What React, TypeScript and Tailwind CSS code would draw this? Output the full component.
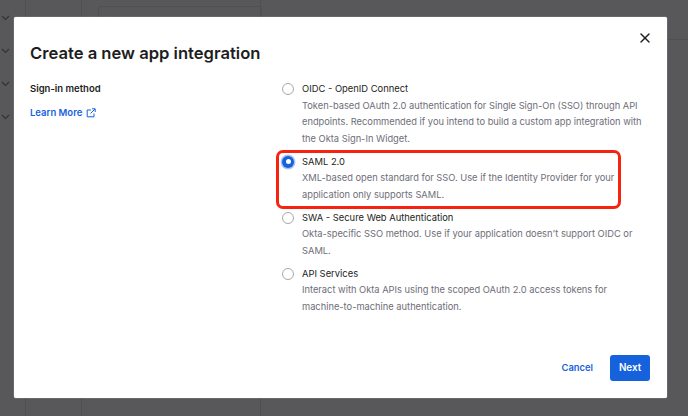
import React from 'react';
import { X, Search } from 'lucide-react';

const font = { fontFamily: 'Inter, "Noto Sans", sans-serif' };

interface MethodOption {
  title: string;
  lines: string[];
  selected?: boolean;
}

const options: MethodOption[] = [
  {
    title: 'OIDC - OpenID Connect',
    lines: [
      'Token-based OAuth 2.0 authentication for Single Sign-On (SSO) through API',
      'endpoints. Recommended if you intend to build a custom app integration with',
      'the Okta Sign-In Widget.',
    ],
  },
  {
    title: 'SAML 2.0',
    selected: true,
    lines: [
      'XML-based open standard for SSO. Use if the Identity Provider for your',
      'application only supports SAML.',
    ],
  },
  {
    title: 'SWA - Secure Web Authentication',
    lines: [
      "Okta-specific SSO method. Use if your application doesn't support OIDC or",
      'SAML.',
    ],
  },
  {
    title: 'API Services',
    lines: [
      'Interact with Okta APIs using the scoped OAuth 2.0 access tokens for',
      'machine-to-machine authentication.',
    ],
  },
];

const Chevron = () => (
  <svg width="9" height="6" viewBox="0 0 9 6" fill="none" stroke="#333335" strokeWidth="1.2">
    <path d="M1 1l3.5 3.5L8 1" />
  </svg>
);

const MethodRow = ({ option }: { option: MethodOption }) => (
  <div className="relative flex gap-[8px]">
    {option.selected ? (
      <span className="mt-[2px] flex h-[12px] w-[12px] shrink-0 items-center justify-center rounded-full bg-[#1662dd] ring-[1.5px] ring-[#a9c4f2]">
        <span className="h-[5px] w-[5px] rounded-full bg-white" />
      </span>
    ) : (
      <span className="mt-[2px] h-[12px] w-[12px] shrink-0 rounded-full border border-[#a8a8ad] bg-white" />
    )}
    <div>
      <div className="text-[9.4px] leading-[16.5px] text-[#1d1d21]">{option.title}</div>
      <div className="text-[9.3px] leading-[16.5px] text-[#6e6e78]">
        {option.lines.map((line) => (
          <div key={line} className="whitespace-nowrap">{line}</div>
        ))}
      </div>
    </div>
    {option.selected && (
      <div className="absolute left-[-6px] top-[-4px] h-[59px] w-[345px] rounded-[7px] border-[3px] border-[#f7230f]" />
    )}
  </div>
);

export default function App() {
  return (
    <div className="relative h-[416px] w-[688px] overflow-hidden bg-[#58585a]" style={font}>
      {/* page behind the dimmed overlay */}
      <div className="flex h-full">
        <div className="flex w-[26px] flex-col gap-[27px] border-r border-[#505052] pl-[1px] pt-[15px]">
          <Chevron />
          <Chevron />
          <Chevron />
          <Chevron />
        </div>
        <div className="w-[56px] border-r border-[#505052]" />
        <div className="w-[179px] border-r border-[#505052] pl-[16px] pt-[6px]">
          <div className="flex h-[30px] w-[164px] items-center gap-[3px] rounded-[3px] border border-[#505052] pl-[10px] text-[10px] text-[#3f3f41]">
            <Search size={10} />
            Search
          </div>
        </div>
        <div className="h-[40px] flex-1 border-b border-[#505052]" />
      </div>

      {/* modal */}
      <div className="absolute left-[14px] top-[17px] flex h-[381px] w-[653px] flex-col rounded-[2px] bg-white shadow-[0_0_1px_#ffffff]">
        <div className="flex items-start justify-between pl-[16px] pr-[14px] pt-[25px]">
          <h1 className="text-[16.6px] font-semibold leading-[22px] text-[#1d1d21]">Create a new app integration</h1>
          <X size={16} strokeWidth={2} className="mt-[-12px] text-[#1d1d21]" />
        </div>

        <div className="flex flex-1 pl-[16px] pt-[17px]">
          <div className="w-[252px] shrink-0">
            <div className="text-[9.5px] font-semibold leading-[16.5px] text-[#1d1d21]">Sign-in method</div>
            <div className="mt-[7px] flex items-center gap-[4px] text-[9.5px] font-semibold leading-[16.5px] text-[#1662dd]">
              Learn More
              <svg width="10" height="10" viewBox="0 0 10 10" fill="none" stroke="#1662dd" strokeWidth="1">
                <path d="M5 2H1.2v6.8H8V5.5" />
                <path d="M4.5 5.5L9 1M6 .8h3.2V4" />
              </svg>
            </div>
          </div>
          <div className="flex flex-col gap-[6.5px]">
            {options.map((option) => (
              <MethodRow key={option.title} option={option} />
            ))}
          </div>
        </div>

        <div className="flex items-center justify-end gap-[17px] pb-[17px] pr-[17px]">
          <span className="text-[9.4px] font-semibold text-[#1662dd]">Cancel</span>
          <button className="h-[26px] w-[40px] rounded-[3px] bg-[#1662dd] text-[9.8px] font-semibold text-white">Next</button>
        </div>
      </div>
    </div>
  );
}
